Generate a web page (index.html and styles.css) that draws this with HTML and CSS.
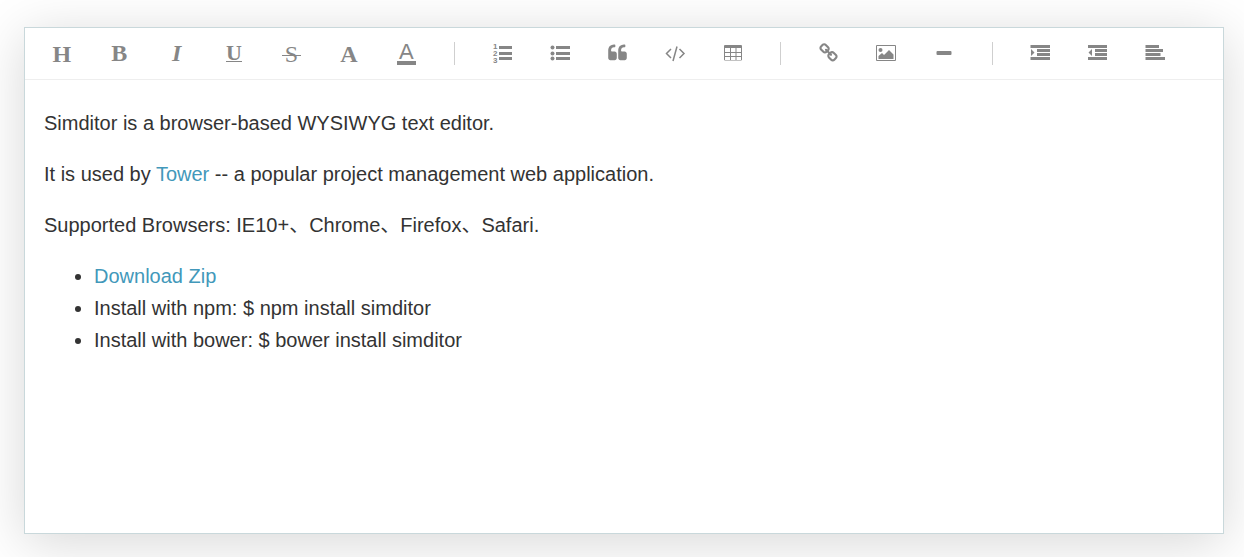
FILE: index.html
```html
<!DOCTYPE html>
<html lang="en">
<head>
<meta charset="utf-8">
<meta name="viewport" content="width=device-width, initial-scale=1">
<title>Simditor</title>
<link rel="stylesheet" href="styles.css">
</head>
<body>
<main class="editor">
  <div class="toolbar" role="toolbar" aria-label="Formatting">
    <button class="tool glyph heading" type="button" aria-label="Heading"><span>H</span></button>
    <button class="tool glyph" type="button" aria-label="Bold"><span>B</span></button>
    <button class="tool glyph italic" type="button" aria-label="Italic"><span>I</span></button>
    <button class="tool glyph underline" type="button" aria-label="Underline"><span>U</span></button>
    <button class="tool glyph strike" type="button" aria-label="Strikethrough"><span>S</span></button>
    <button class="tool glyph scale" type="button" aria-label="Font size"><span>A</span></button>
    <button class="tool glyph color" type="button" aria-label="Text color"><span>A</span></button>
    <span class="separator"></span>
    <button class="tool" type="button" aria-label="Ordered list"><svg class="icon" viewBox="0 0 24 25"><path d="M8 5h13v3H8zM8 11h13v3H8zM8 16h13v3H8z"/><g class="digits"><text x="2" y="8">1</text><text x="2" y="15">2</text><text x="2" y="22">3</text></g></svg></button>
    <button class="tool" type="button" aria-label="Unordered list"><svg class="icon" viewBox="0 0 24 25"><path d="M8 5h14v3H8zM8 11h14v3H8zM8 16h14v3H8z"/><circle cx="4.500" cy="6.500" r="2"/><circle cx="4.500" cy="12.500" r="2"/><circle cx="4.500" cy="17.500" r="2"/></svg></button>
    <button class="tool" type="button" aria-label="Quote"><svg class="icon" viewBox="0 0 24 25"><path transform="translate(1.500 2) scale(.01116)" d="M832 960v384q0 80-56 136t-136 56h-384q-80 0-136-56t-56-136v-704q0-104 40.500-198.500t109.500-163.500 163.500-109.500 198.500-40.500h64q26 0 45 19t19 45v128q0 26-19 45t-45 19h-64q-106 0-181 75t-75 181v32q0 40 28 68t68 28h224q80 0 136 56t56 136zm896 0v384q0 80-56 136t-136 56h-384q-80 0-136-56t-56-136v-704q0-104 40.500-198.500t109.500-163.500 163.500-109.500 198.500-40.500h64q26 0 45 19t19 45v128q0 26-19 45t-45 19h-64q-106 0-181 75t-75 181v32q0 40 28 68t68 28h224q80 0 136 56t56 136z"/></svg></button>
    <button class="tool" type="button" aria-label="Code"><svg class="icon line" viewBox="0 0 24 25"><path d="M8 8L3.500 12.500 8 17M14 5.500l-4 14.500M16.500 8L21 12.500 16.500 17"/></svg></button>
    <button class="tool" type="button" aria-label="Table"><svg class="icon" viewBox="0 0 24 25"><path fill-rule="evenodd" d="M4 4h16q1 0 1 1v13.500q0 1-1 1H4q-1 0-1-1V5q0-1 1-1zM4 7v4h5V7zM10 7v4h4.500V7zM15.500 7v4H20V7zM4 12v3h5v-3zM10 12v3h4.500v-3zM15.500 12v3H20v-3zM4 16v3h5v-3zM10 16v3h4.500v-3zM15.500 16v3H20v-3z"/></svg></button>
    <span class="separator"></span>
    <button class="tool" type="button" aria-label="Link"><svg class="icon" viewBox="0 0 24 25"><path transform="translate(1.500 2) scale(.01116)" d="M1520 1216q0-40-28-68l-208-208q-28-28-68-28-42 0-72 32 3 3 19 18.500t21.500 21.500 15 19 13 25.500 3.500 27.500q0 40-28 68t-68 28q-15 0-27.500-3.500t-25.500-13-19-15-21.500-21.500-18.500-19q-33 31-33 73 0 40 28 68l206 207q27 27 68 27 40 0 68-26l147-146q28-28 28-67zm-703-705q0-40-28-68l-206-207q-28-28-68-28-39 0-68 27l-147 146q-28 28-28 67 0 40 28 68l208 208q27 27 68 27 42 0 72-31-3-3-19-18.500t-21.500-21.500-15-19-13-25.500-3.500-27.500q0-40 28-68t68-28q15 0 27.500 3.500t25.500 13 19 15 21.500 21.500 18.500 19q33-31 33-73zm895 705q0 120-85 203l-147 146q-83 83-203 83-121 0-204-85l-206-207q-83-83-83-203 0-123 88-209l-88-88q-86 88-208 88-120 0-204-84l-208-208q-84-84-84-204t85-203l147-146q83-83 203-83 121 0 204 85l206 207q83 83 83 203 0 123-88 209l88 88q86-88 208-88 120 0 204 84l208 208q84 84 84 204z"/></svg></button>
    <button class="tool" type="button" aria-label="Image"><svg class="icon" viewBox="0 0 24 25"><path fill-rule="evenodd" d="M3 4h18q1 0 1 1v14q0 1-1 1H3q-1 0-1-1V5q0-1 1-1zM3 5v14h18V5z"/><circle cx="6.500" cy="9" r="2"/><path d="M4.500 18v-3L8 12l2 2 5-5 4.500 4.500V18z"/></svg></button>
    <button class="tool" type="button" aria-label="Horizontal rule"><svg class="icon" viewBox="0 0 24 25"><rect x="4.500" y="10" width="15" height="4" rx="1"/></svg></button>
    <span class="separator"></span>
    <button class="tool" type="button" aria-label="Indent"><svg class="icon" viewBox="0 0 24 25"><path d="M2.500 4H22v3H2.500zM9 8h13v3H9zM9 12h13v3H9zM2.500 16H22v3H2.500zM3 8l3.500 3.500L3 15z"/></svg></button>
    <button class="tool" type="button" aria-label="Outdent"><svg class="icon" viewBox="0 0 24 25"><path d="M2 4h19v3H2zM9 8h12v3H9zM9 12h12v3H9zM2 16h19v3H2zM6 8l-3.500 3.500L6 15z"/></svg></button>
    <button class="tool" type="button" aria-label="Alignment"><svg class="icon" viewBox="0 0 24 25"><path d="M2.500 4H16v3H2.500zM2.500 8H20v3H2.500zM2.500 12H17.500v3H2.500zM2.500 16H22v3H2.500z"/></svg></button>
  </div>
  <div class="content">
    <p>Simditor is a browser-based WYSIWYG text editor.</p>
    <p>It is used by <a href="#">Tower</a> -- a popular project management web application.</p>
    <p>Supported Browsers: IE10+、Chrome、Firefox、Safari.</p>
    <ul>
      <li><a href="#">Download Zip</a></li>
      <li>Install with npm: $ npm install simditor</li>
      <li>Install with bower: $ bower install simditor</li>
    </ul>
  </div>
</main>
</body>
</html>
```
FILE: styles.css
```css
* { box-sizing: border-box; }

body {
  margin: 0;
  padding: 27px 20px 23px 24px;
  min-height: 100vh;
  display: flex;
  background: #fff;
  color: #333;
  font: 20px/32px "Liberation Sans", Arial, "Noto Sans CJK SC", sans-serif;
}

.editor {
  flex: 1;
  border: 1px solid #c9d8db;
  background: #fff;
  box-shadow: 0 8px 50px rgba(0, 0, 0, 0.16);
}

.toolbar {
  display: flex;
  align-items: center;
  height: 52px;
  padding: 0 39px 0 8px;
  border-bottom: 1px solid #eee;
}

.tool {
  flex: 1;
  min-width: 0;
  height: 51px;
  padding: 0;
  border: 0;
  background: none;
  color: #868686;
  display: flex;
  align-items: center;
  justify-content: center;
  cursor: pointer;
}

.separator {
  width: 1px;
  height: 23px;
  margin: 0 19px;
  background: #cfcfcf;
}

.icon {
  width: 24px;
  height: 25px;
  flex: none;
  fill: currentColor;
}

.line {
  fill: none;
  stroke: currentColor;
  stroke-width: 1.5;
}

.digits {
  font: bold 8px "Liberation Sans", Arial, sans-serif;
}

.glyph {
  padding-bottom: 2px;
  font: bold 24px/24px "Liberation Serif", "Times New Roman", serif;
}

.heading { padding-bottom: 0; }

.italic { font-style: italic; }

.underline { padding-bottom: 0; }

.underline span {
  font-size: 22px;
  line-height: 16px;
  border-bottom: 1px solid;
}

.strike { padding-bottom: 0; }

.strike span {
  padding: 0 3px;
  font-weight: normal;
  background: linear-gradient(currentColor, currentColor) center 13px / 100% 1px no-repeat;
}

.scale { padding-bottom: 0; }

.color { padding-bottom: 0; }

.color span {
  padding: 0 2px;
  font: 22px/18px "Liberation Sans", Arial, sans-serif;
  border-bottom: 4px solid;
}

.content { padding: 27px 19px; }

.content p { margin: 0 0 19px; }

.content ul {
  margin: 0;
  padding: 0 0 0 50px;
}

.content a {
  color: #4298ba;
  text-decoration: none;
}
```
